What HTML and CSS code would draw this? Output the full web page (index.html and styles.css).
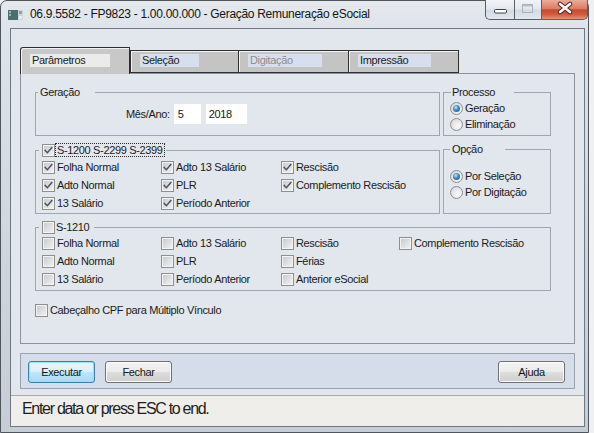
FILE: index.html
```html
<!DOCTYPE html>
<html lang="pt-BR">
<head>
<meta charset="utf-8">
<title>Geração Remuneração eSocial</title>
<link rel="stylesheet" href="styles.css">
</head>
<body>
<svg class="defs" aria-hidden="true">
  <symbol id="ck" viewBox="0 0 11 11">
    <path d="M2.2 5.4 L4.4 7.7 L8.8 2.6" fill="none" stroke="#4a5466" stroke-width="1.5" stroke-linecap="square"/>
  </symbol>
</svg>
<div class="window">
  <div class="titlebar">
    <svg class="app-icon" width="15" height="10" viewBox="0 0 15 10">
      <rect x="0" y="0" width="15" height="10" fill="#cdd6d8"/>
      <rect x="0" y="0" width="10" height="10" fill="#4a6f6e"/>
      <rect x="1" y="1" width="2" height="2" fill="#9db4b3"/>
      <rect x="1" y="4" width="2" height="2" fill="#9db4b3"/>
      <rect x="11" y="1" width="3" height="3" fill="#8fa3a4"/>
      <rect x="11" y="6" width="3" height="3" fill="#e8eeee"/>
    </svg>
    <span class="title">06.9.5582 - FP9823 - 1.00.00.000 - Geração Remuneração eSocial</span>
    <div class="caption-buttons">
      <span class="cap-btn cap-min">
        <svg width="29" height="20" viewBox="0 0 29 20"><rect x="9.5" y="10.5" width="12" height="3.5" rx="1" fill="#fff" stroke="#3a4048"/></svg>
      </span>
      <span class="cap-btn cap-max">
        <svg width="27" height="20" viewBox="0 0 27 20"><rect x="8.5" y="5.5" width="10" height="8" fill="none" stroke="#aab3bd"/><rect x="9" y="6" width="9" height="1.5" fill="#b7c0ca"/></svg>
      </span>
      <span class="cap-btn cap-close">
        <svg width="47" height="20" viewBox="0 0 47 20">
          <path d="M19 5 L29 13 M29 5 L19 13" stroke="#5a2418" stroke-width="4.6" stroke-linecap="round"/>
          <path d="M19 5 L29 13 M29 5 L19 13" stroke="#ffffff" stroke-width="2.6" stroke-linecap="round"/>
        </svg>
      </span>
    </div>
  </div>

  <div class="client">
    <div class="main">
      <div class="tabstrip">
        <div class="tab active"><span class="tab-label lbl-param">Parâmetros</span></div>
        <div class="tab tab-sel"><span class="tab-label lbl-sel">Seleção</span></div>
        <div class="tab tab-dig"><span class="tab-label lbl-dig disabled">Digitação</span></div>
        <div class="tab tab-imp"><span class="tab-label lbl-imp">Impressão</span></div>
      </div>

      <div class="panel">
        <div class="form">
          <fieldset class="group">
            <legend class="lg-geracao">Geração</legend>
            <div class="date-row">
              <span class="date-label">Mês/Ano:</span>
              <input class="field f-mes" value="5" readonly>
              <input class="field f-ano" value="2018" readonly>
            </div>
          </fieldset>

          <fieldset class="group">
            <legend class="lg-processo">Processo</legend>
            <div class="radios r-processo">
              <div class="opt"><span class="rad on"></span><span>Geração</span></div>
              <div class="opt"><span class="rad"></span><span>Eliminação</span></div>
            </div>
          </fieldset>

          <fieldset class="group">
            <legend class="lg-chk lg-s1200"><span class="chk"><svg class="ck"><use href="#ck"/></svg></span><span class="focus">S-1200 S-2299 S-2399</span></legend>
            <div class="chk-grid">
              <div class="opt"><span class="chk"><svg class="ck"><use href="#ck"/></svg></span><span>Folha Normal</span></div>
              <div class="opt"><span class="chk"><svg class="ck"><use href="#ck"/></svg></span><span>Adto 13 Salário</span></div>
              <div class="opt"><span class="chk"><svg class="ck"><use href="#ck"/></svg></span><span>Rescisão</span></div>
              <div class="opt"></div>
              <div class="opt"><span class="chk"><svg class="ck"><use href="#ck"/></svg></span><span>Adto Normal</span></div>
              <div class="opt"><span class="chk"><svg class="ck"><use href="#ck"/></svg></span><span>PLR</span></div>
              <div class="opt"><span class="chk"><svg class="ck"><use href="#ck"/></svg></span><span>Complemento Rescisão</span></div>
              <div class="opt"></div>
              <div class="opt"><span class="chk"><svg class="ck"><use href="#ck"/></svg></span><span>13 Salário</span></div>
              <div class="opt"><span class="chk"><svg class="ck"><use href="#ck"/></svg></span><span>Período Anterior</span></div>
            </div>
          </fieldset>

          <fieldset class="group">
            <legend class="lg-opcao">Opção</legend>
            <div class="radios r-opcao">
              <div class="opt"><span class="rad on"></span><span>Por Seleção</span></div>
              <div class="opt"><span class="rad"></span><span>Por Digitação</span></div>
            </div>
          </fieldset>

          <fieldset class="group wide">
            <legend class="lg-chk lg-s1210"><span class="chk"></span><span class="plain">S-1210</span></legend>
            <div class="chk-grid g-s1210">
              <div class="opt"><span class="chk"></span><span>Folha Normal</span></div>
              <div class="opt"><span class="chk"></span><span>Adto 13 Salário</span></div>
              <div class="opt"><span class="chk"></span><span>Rescisão</span></div>
              <div class="opt"><span class="chk"></span><span>Complemento Rescisão</span></div>
              <div class="opt"><span class="chk"></span><span>Adto Normal</span></div>
              <div class="opt"><span class="chk"></span><span>PLR</span></div>
              <div class="opt"><span class="chk"></span><span>Férias</span></div>
              <div class="opt"></div>
              <div class="opt"><span class="chk"></span><span>13 Salário</span></div>
              <div class="opt"><span class="chk"></span><span>Período Anterior</span></div>
              <div class="opt"><span class="chk"></span><span>Anterior eSocial</span></div>
            </div>
          </fieldset>

          <div class="opt cpf-row"><span class="chk"></span><span>Cabeçalho CPF para Múltiplo Vínculo</span></div>
        </div>
      </div>

      <div class="buttonbar">
        <button class="btn default">Executar</button>
        <button class="btn">Fechar</button>
        <button class="btn btn-help">Ajuda</button>
      </div>
    </div>
    <div class="statusbar">Enter data or press ESC to end.</div>
  </div>
</div>
</body>
</html>
```

FILE: styles.css
```css
* { box-sizing: border-box; }

html, body { margin: 0; padding: 0; }

body {
  width: 594px;
  height: 433px;
  overflow: hidden;
  background: #eef0f2;
  font-family: "Liberation Sans", Arial, sans-serif;
  font-size: 11px;
  letter-spacing: -0.35px;
  color: #1b1b1b;
}

.defs { position: absolute; width: 0; height: 0; overflow: hidden; }

.window {
  width: 589px;
  height: 433px;
  border: 1px solid #4f555d;
  border-radius: 7px 7px 0 0;
  background: linear-gradient(180deg, #e5e9ee 0, #dfe4ea 27px, #cfd5dc 60%, #c6cdd5 100%);
  display: flex;
  flex-direction: column;
}

/* ---------- title bar ---------- */
.titlebar {
  height: 27px;
  flex: none;
  display: flex;
  align-items: flex-start;
  padding-left: 7px;
}

.app-icon { margin-top: 9px; flex: none; }

.title {
  margin-left: 7px;
  margin-top: 6px;
  font-size: 12px;
  line-height: 14px;
  letter-spacing: -0.3px;
  color: #141414;
  white-space: nowrap;
}

.caption-buttons {
  margin-left: auto;
  margin-top: -1px;
  display: flex;
}

.cap-btn {
  display: block;
  height: 20px;
  border: 1px solid #59606a;
  border-top: none;
}
.cap-btn svg { display: block; margin: -1px 0 0 -1px; }

.cap-min {
  width: 29px;
  border-right: none;
  border-radius: 0 0 0 5px;
  background: linear-gradient(180deg, #f1f4f7 0%, #e2e8ee 48%, #d1d9e2 52%, #e1e8ef 100%);
}
.cap-max {
  width: 27px;
  border-right: none;
  background: linear-gradient(180deg, #f1f4f7 0%, #e2e8ee 48%, #d1d9e2 52%, #e1e8ef 100%);
}
.cap-close {
  width: 47px;
  border-radius: 0 0 5px 0;
  background: linear-gradient(180deg, #e9ad9b 0%, #dc7c63 45%, #c94a30 52%, #cf5a3c 75%, #e39478 100%);
}

/* ---------- client ---------- */
.client {
  flex: 1;
  margin: 0 3px 5px 9px;
  border: 1px solid #6f7781;
  background: #e2e6ed;
  display: flex;
  flex-direction: column;
}

.main {
  flex: 1;
  display: flex;
  flex-direction: column;
  padding: 18px 9px 6px 9px;
}

/* ---------- tabs ---------- */
.tabstrip {
  height: 27px;
  flex: none;
  display: flex;
  align-items: flex-end;
  margin-bottom: -1px;
  position: relative;
  z-index: 1;
}

.tab {
  height: 23px;
  margin-bottom: 1px;
  border: 1px solid #2f2f2f;
  border-right: none;
  background: #c4c4c4;
  box-shadow: inset 1px 1px 0 #f2f2f2;
  padding: 3px 0 0 9px;
}
.tab.active {
  width: 110px;
  height: 27px;
  margin-bottom: 0;
  border-right: 1px solid #2f2f2f;
  border-bottom: none;
  border-radius: 3px 0 0 0;
  background: #c8c8c8;
  padding-top: 6px;
}
.tab-sel { width: 108px; }
.tab-dig { width: 110px; }
.tab-imp { width: 111px; border-right: 1px solid #2f2f2f; }

.tab-label {
  display: block;
  height: 13px;
  line-height: 13px;
  padding-left: 2px;
  background: #d7dfef;
  white-space: nowrap;
}
.lbl-param { width: 80px; background: #ebebeb; }
.lbl-sel { width: 59px; }
.lbl-dig { width: 74px; }
.lbl-imp { width: 73px; }
.tab-label.disabled { color: #8d8d8d; }

/* ---------- panel ---------- */
.panel {
  flex: 1;
  border: 1px solid #8c939d;
  background: #e2e6ed;
  padding: 12px 21px 0 14px;
}

.form {
  display: grid;
  grid-template-columns: 405px 108px;
  grid-template-rows: 50px 71px 70px auto;
  column-gap: 3px;
  row-gap: 7px;
}

.group {
  margin: 0;
  padding: 0;
  min-width: 0;
  border: 1px solid #a0a6b0;
}
.group.wide { grid-column: 1 / -1; }

.group legend {
  margin: 0;
  padding: 0;
  height: 13px;
  line-height: 13px;
  white-space: nowrap;
}
.lg-geracao { margin-left: 2px !important; padding: 0 15px 0 2px !important; }
.lg-processo { margin-left: 7px !important; padding: 0 19px 0 1px !important; }
.lg-opcao { margin-left: 6px !important; padding: 0 22px 0 2px !important; }

.lg-chk {
  display: flex;
  align-items: center;
  margin-left: 3px !important;
  padding: 0 1px 0 3px !important;
}
.lg-s1200 { height: 14px !important; }
.lg-s1210 { padding-right: 5px !important; }
.lg-chk .focus {
  height: 14px;
  line-height: 12px;
  border: 1px dotted #2a2a2a;
  padding: 0 1px;
}
.lg-chk .plain { margin-left: 1px; }

/* geração */
.date-row {
  display: flex;
  align-items: center;
  padding: 5px 0 0 90px;
}
.date-label { margin-right: 4px; }
.field {
  height: 20px;
  border: 0;
  background: #fff;
  font-family: inherit;
  font-size: 11px;
  letter-spacing: -0.35px;
  color: #161616;
  padding: 0 0 0 4px;
  margin: 0;
  outline: none;
}
.f-mes { width: 27px; margin-right: 5px; }
.f-ano { width: 41px; padding-left: 3px; }

/* options */
.opt {
  display: flex;
  align-items: center;
  white-space: nowrap;
}

.radios { padding-left: 6px; }
.radios .opt { height: 16px; gap: 2px; }
.r-processo { padding-top: 1px; }
.r-opcao { padding-top: 12px; }

.chk-grid {
  display: grid;
  grid-template-columns: 119px 120px 118px auto;
  grid-auto-rows: 18px;
  padding: 1px 0 0 6px;
}
.chk-grid.g-s1210 { padding-top: 0; }
.chk-grid .opt { gap: 2px; }

.cpf-row {
  grid-column: 1 / -1;
  margin-top: 5px;
  height: 14px;
  gap: 2px;
}

.chk {
  flex: none;
  width: 13px;
  height: 13px;
  border: 1px solid #8e8f8f;
  background: linear-gradient(135deg, #c4c7cb 0%, #dfe0e2 55%, #f3f3f3 100%);
  box-shadow: inset 0 0 0 1px #f3f3f3;
  display: flex;
  align-items: center;
  justify-content: center;
}
.ck { width: 11px; height: 11px; display: block; }

.rad {
  flex: none;
  width: 13px;
  height: 13px;
  border-radius: 50%;
  border: 1px solid #8e8f8f;
  background: radial-gradient(circle at 65% 65%, #fbfbfb 0%, #e2e2e2 60%, #c9c9c9 100%);
  position: relative;
}
.rad.on::after {
  content: "";
  position: absolute;
  left: 2px;
  top: 2px;
  width: 7px;
  height: 7px;
  border-radius: 50%;
  background: radial-gradient(circle at 40% 35%, #bfe3fb 0%, #3d86c9 45%, #1a4f8c 100%);
}

/* ---------- button bar ---------- */
.buttonbar {
  height: 36px;
  flex: none;
  margin-top: 9px;
  border: 1px solid #9aa2ae;
  background: #d5dcea;
  display: flex;
  align-items: flex-start;
  gap: 10px;
  padding: 7px 9px 0 7px;
}

.btn {
  width: 67px;
  height: 22px;
  margin: 0;
  padding: 0;
  border: 1px solid #707070;
  border-radius: 3px;
  background: linear-gradient(180deg, #f3f3f3 0%, #ebebeb 48%, #dddddd 52%, #cfcfcf 100%);
  box-shadow: inset 0 0 0 1px #fbfbfb;
  font-family: inherit;
  font-size: 11px;
  letter-spacing: -0.35px;
  color: #151515;
  text-align: center;
  line-height: 20px;
}
.btn.default {
  border-color: #3c7fb1;
  background: linear-gradient(180deg, #eaf6fd 0%, #d9f0fc 48%, #bee6fd 52%, #a7d9f5 100%);
  box-shadow: inset 0 0 0 1px #9fdcf8;
}
.btn-help { margin-left: auto; }

/* ---------- status bar ---------- */
.statusbar {
  height: 31px;
  flex: none;
  border-top: 1px solid #a8a8a8;
  background: #f0eeeb;
  padding: 4px 0 0 11px;
  font-size: 16px;
  line-height: 18px;
  letter-spacing: -1.3px;
  color: #1e1e1e;
  white-space: nowrap;
}
```
